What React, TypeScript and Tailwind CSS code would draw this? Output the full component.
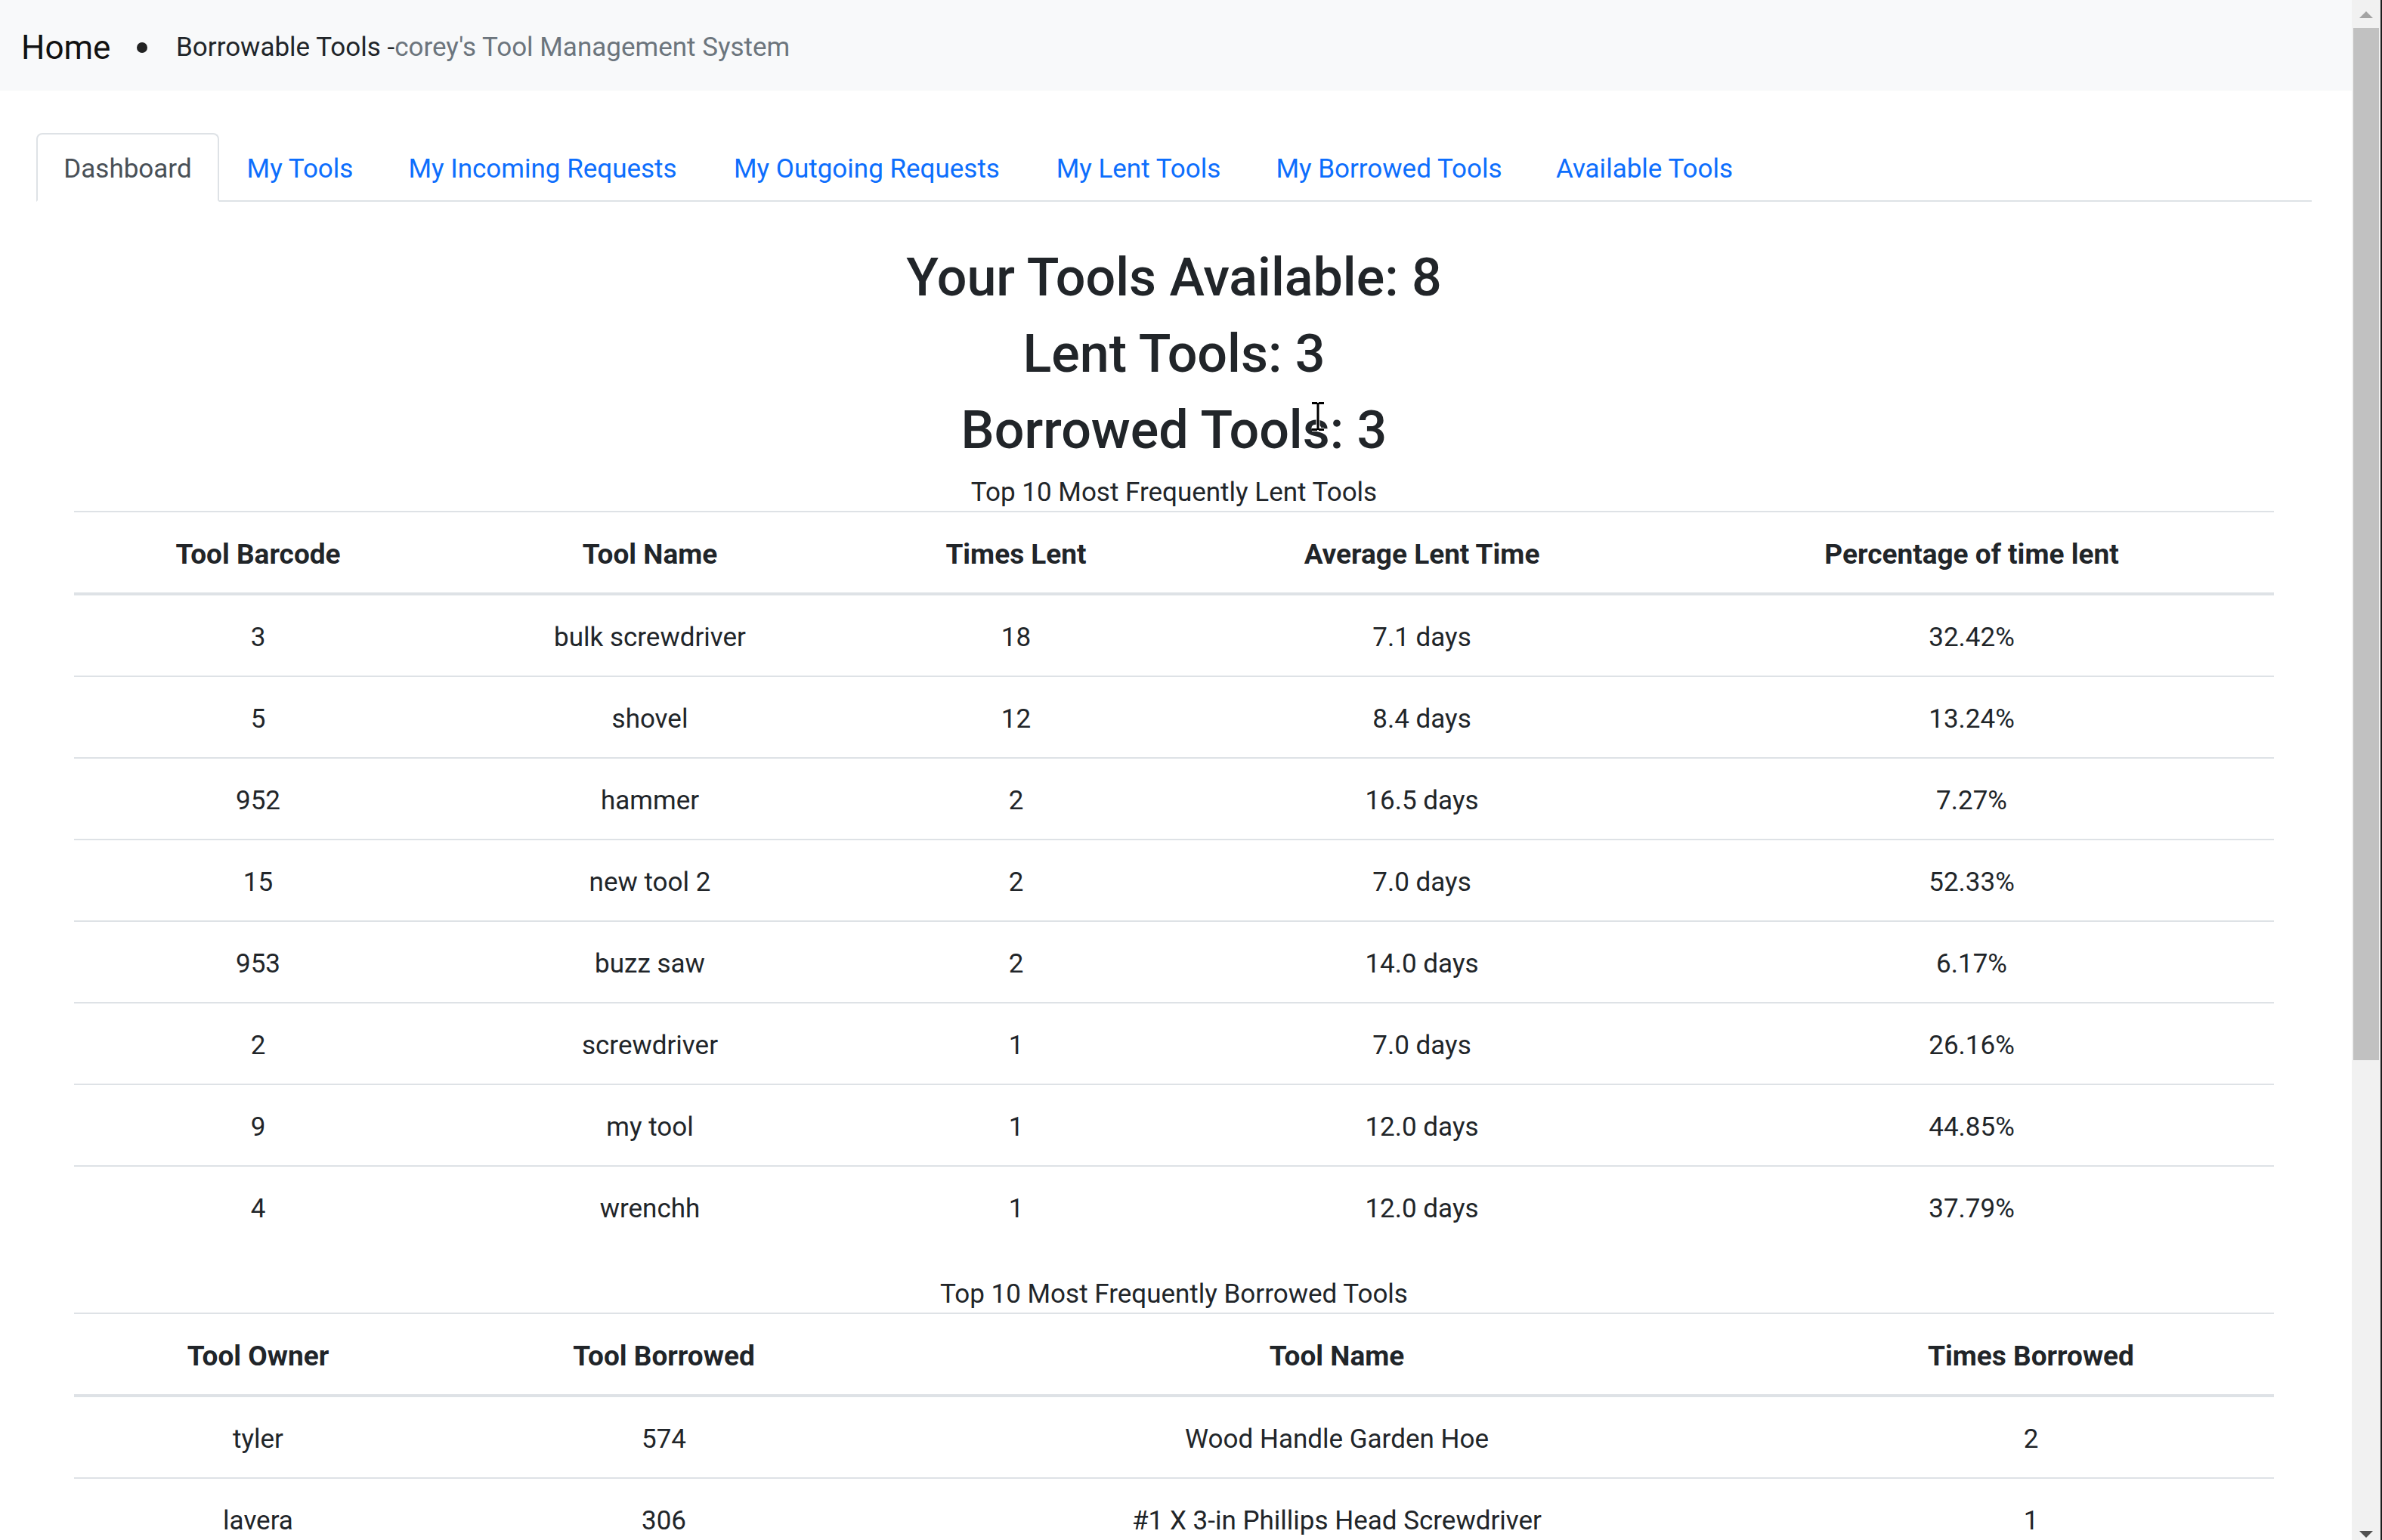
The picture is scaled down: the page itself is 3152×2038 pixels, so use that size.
import React from "react";

const lent: string[][] = [
  ["3", "bulk screwdriver", "18", "7.1 days", "32.42%"],
  ["5", "shovel", "12", "8.4 days", "13.24%"],
  ["952", "hammer", "2", "16.5 days", "7.27%"],
  ["15", "new tool 2", "2", "7.0 days", "52.33%"],
  ["953", "buzz saw", "2", "14.0 days", "6.17%"],
  ["2", "screwdriver", "1", "7.0 days", "26.16%"],
  ["9", "my tool", "1", "12.0 days", "44.85%"],
  ["4", "wrenchh", "1", "12.0 days", "37.79%"],
];

const borrowed: string[][] = [
  ["tyler", "574", "Wood Handle Garden Hoe", "2"],
  ["lavera", "306", "#1 X 3-in Phillips Head Screwdriver", "1"],
];

const tabs = [
  { label: "Dashboard", w: "w-[242px]", active: true },
  { label: "My Tools", w: "w-[214px]", active: false },
  { label: "My Incoming Requests", w: "w-[428px]", active: false },
  { label: "My Outgoing Requests", w: "w-[430px]", active: false },
  { label: "My Lent Tools", w: "w-[289px]", active: false },
  { label: "My Borrowed Tools", w: "w-[374px]", active: false },
  { label: "Available Tools", w: "w-[302px]", active: false },
];

function Th({ children }: { children: React.ReactNode }) {
  return (
    <th className="h-[110px] border-b-4 border-[#dee2e6] p-0 pt-[4px] text-center align-middle text-[37px] font-bold leading-[53px]">
      {children}
    </th>
  );
}

function Td({ children, last }: { children: React.ReactNode; last?: boolean }) {
  return (
    <td
      className={
        last
          ? "h-[106px] p-0 pt-[5px] text-center align-middle leading-[53px]"
          : "h-[108px] border-b-2 border-[#dee2e6] p-0 pt-[5px] text-center align-middle leading-[53px]"
      }
    >
      {children}
    </td>
  );
}

function Scrollbar() {
  return (
    <div className="flex h-full w-[40px] shrink-0">
      <div className="flex h-full w-[38px] flex-col bg-[#f1f1f1]">
        <div className="flex h-[37px] shrink-0 justify-center pt-[15px]">
          <svg width="18" height="9" viewBox="0 0 18 9">
            <path d="M0 9 L9 0 L18 9 Z" fill="#a3a3a3" />
          </svg>
        </div>
        <div className="mx-[2px] h-[1366px] shrink-0 bg-[#c1c1c1]" />
        <div className="flex-1" />
        <div className="flex shrink-0 justify-center pb-[3px]">
          <svg width="18" height="9" viewBox="0 0 18 9">
            <path d="M0 0 L18 0 L9 9 Z" fill="#505050" />
          </svg>
        </div>
      </div>
      <div className="h-full w-[2px] bg-[#1c1c1c]" />
    </div>
  );
}

export default function App() {
  return (
    <div className="flex h-[2038px] w-[3152px] overflow-hidden bg-white font-[Roboto,sans-serif] text-[#212529]">
      <div className="relative h-full min-w-0 flex-1 overflow-hidden">
        {/* Top bar */}
        <header className="flex h-[120px] items-center bg-[#f8f9fa] pl-[28px] pt-[5px]">
          <span className="inline-block w-[147px] text-[44px] leading-none text-[#111]">Home</span>
          <span className="ml-[6px] inline-block h-[14px] w-[14px] rounded-full bg-[#222]" />
          <span className="ml-[38px] text-[35px] leading-none">
            <span className="text-[#212529]">Borrowable Tools -</span>
            <span className="text-[#6c757d]">corey's Tool Management System</span>
          </span>
        </header>

        <div className="pl-[48px] pr-[53px]">
          {/* Tabs */}
          <ul className="mt-[56px] flex border-b-2 border-[#dee2e6]">
            {tabs.map((t) => (
              <li key={t.label} className="-mb-[2px]">
                <a
                  className={
                    t.active
                      ? `flex h-[91px] ${t.w} items-center justify-center rounded-t-[8px] border-2 border-[#dee2e6] border-b-white bg-white pt-[4px] text-[35px] leading-[53px] text-[#495057]`
                      : `flex h-[91px] ${t.w} items-center justify-center border-2 border-transparent pt-[4px] text-[35px] leading-[53px] text-[#0d6efd]`
                  }
                >
                  {t.label}
                </a>
              </li>
            ))}
          </ul>

          <div className="px-[50px] text-[35px]">
            <h2 className="mb-[17px] mt-[58px] text-center text-[70px] font-medium leading-[84px]">
              Your Tools Available: 8
            </h2>
            <h2 className="mb-[17px] text-center text-[70px] font-medium leading-[84px]">Lent Tools: 3</h2>
            <h2 className="mb-[17px] text-center text-[70px] font-medium leading-[84px]">Borrowed Tools: 3</h2>

            <div className="h-[48px] text-center leading-[48px]">Top 10 Most Frequently Lent Tools</div>
            <table className="mb-[39px] w-full table-fixed border-separate border-spacing-0 border-t-2 border-[#dee2e6]">
              <colgroup>
                <col className="w-[487px]" />
                <col className="w-[550px]" />
                <col className="w-[419px]" />
                <col className="w-[655px]" />
                <col />
              </colgroup>
              <thead>
                <tr>
                  <Th>Tool Barcode</Th>
                  <Th>Tool Name</Th>
                  <Th>Times Lent</Th>
                  <Th>Average Lent Time</Th>
                  <Th>Percentage of time lent</Th>
                </tr>
              </thead>
              <tbody>
                {lent.map((r, i) => (
                  <tr key={i}>
                    {r.map((c, j) => (
                      <Td key={j} last={i === lent.length - 1}>
                        {c}
                      </Td>
                    ))}
                  </tr>
                ))}
              </tbody>
            </table>

            <div className="h-[48px] text-center leading-[48px]">Top 10 Most Frequently Borrowed Tools</div>
            <table className="w-full table-fixed border-separate border-spacing-0 border-t-2 border-[#dee2e6]">
              <colgroup>
                <col className="w-[487px]" />
                <col className="w-[587px]" />
                <col className="w-[1194px]" />
                <col />
              </colgroup>
              <thead>
                <tr>
                  <Th>Tool Owner</Th>
                  <Th>Tool Borrowed</Th>
                  <Th>Tool Name</Th>
                  <Th>Times Borrowed</Th>
                </tr>
              </thead>
              <tbody>
                {borrowed.map((r, i) => (
                  <tr key={i}>
                    {r.map((c, j) => (
                      <Td key={j}>{c}</Td>
                    ))}
                  </tr>
                ))}
              </tbody>
            </table>
          </div>
        </div>

        {/* Mouse I-beam cursor */}
        <svg
          className="pointer-events-none absolute left-[1734px] top-[531px]"
          width="20"
          height="40"
          viewBox="0 0 20 40"
        >
          <path d="M2 2.5 H9 M11 2.5 H18 M10 2 V38 M2 37.5 H9 M11 37.5 H18" stroke="#fff" strokeWidth="5" fill="none" />
          <path d="M2 2.5 H9 M11 2.5 H18 M10 2 V38 M2 37.5 H9 M11 37.5 H18" stroke="#000" strokeWidth="3" fill="none" />
        </svg>
      </div>
      <Scrollbar />
    </div>
  );
}
